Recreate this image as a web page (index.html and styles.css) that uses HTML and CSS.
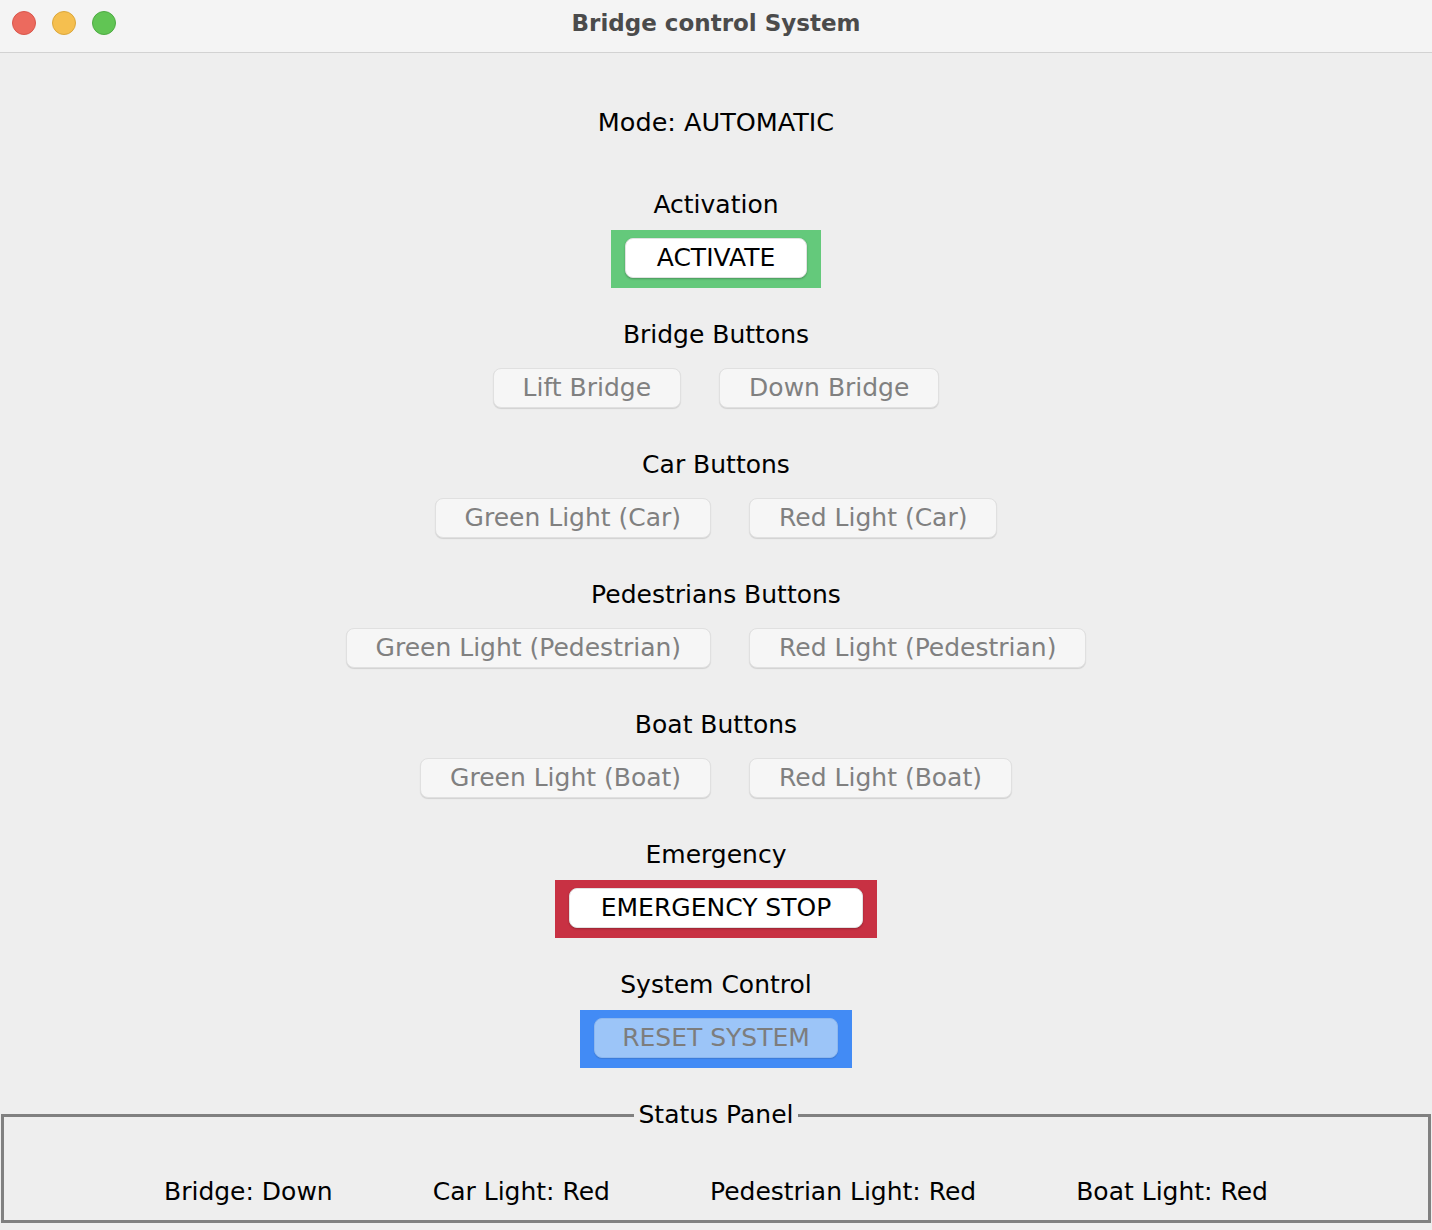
FILE: index.html
```html
<!DOCTYPE html>
<html>
<head>
<meta charset="utf-8">
<title>Bridge control System</title>
<link rel="stylesheet" href="styles.css">
</head>
<body>
<div class="window">
  <header class="titlebar">
    <div class="lights">
      <span class="light red"></span>
      <span class="light yellow"></span>
      <span class="light green"></span>
    </div>
    <div class="title">Bridge control System</div>
  </header>
  <main class="content">
    <div class="mode">Mode: AUTOMATIC</div>

    <section class="group">
      <div class="label">Activation</div>
      <div class="row panel-green">
        <button class="btn active">ACTIVATE</button>
      </div>
    </section>

    <section class="group">
      <div class="label">Bridge Buttons</div>
      <div class="row">
        <button class="btn disabled">Lift Bridge</button>
        <button class="btn disabled">Down Bridge</button>
      </div>
    </section>

    <section class="group">
      <div class="label">Car Buttons</div>
      <div class="row">
        <button class="btn disabled">Green Light (Car)</button>
        <button class="btn disabled">Red Light (Car)</button>
      </div>
    </section>

    <section class="group">
      <div class="label">Pedestrians Buttons</div>
      <div class="row">
        <button class="btn disabled">Green Light (Pedestrian)</button>
        <button class="btn disabled">Red Light (Pedestrian)</button>
      </div>
    </section>

    <section class="group">
      <div class="label">Boat Buttons</div>
      <div class="row">
        <button class="btn disabled">Green Light (Boat)</button>
        <button class="btn disabled">Red Light (Boat)</button>
      </div>
    </section>

    <section class="group">
      <div class="label">Emergency</div>
      <div class="row panel-red">
        <button class="btn active">EMERGENCY STOP</button>
      </div>
    </section>

    <section class="group">
      <div class="label">System Control</div>
      <div class="row panel-blue">
        <button class="btn reset">RESET SYSTEM</button>
      </div>
    </section>

    <fieldset class="status">
      <legend>Status Panel</legend>
      <div class="status-row">
        <span>Bridge: Down</span>
        <span>Car Light: Red</span>
        <span>Pedestrian Light: Red</span>
        <span>Boat Light: Red</span>
      </div>
    </fieldset>
  </main>
</div>
</body>
</html>
```

FILE: styles.css
```css
* { box-sizing: border-box; }
html, body { margin: 0; padding: 0; }
body {
  width: 1432px;
  height: 1230px;
  background: #eeeeee;
  font-family: "DejaVu Sans", "Liberation Sans", sans-serif;
  color: #000;
  overflow: hidden;
}
.window { display: flex; flex-direction: column; height: 1230px; }
.titlebar {
  height: 53px;
  background: #f4f4f4;
  border-bottom: 1px solid #d2d2d2;
  display: flex;
  align-items: center;
  position: relative;
}
.lights { display: flex; gap: 16px; padding-left: 12px; margin-top: -6px; }
.light { width: 24px; height: 24px; border-radius: 50%; display: block; }
.light.red { background: #ec6a5e; border: 1px solid #d9564b; }
.light.yellow { background: #f5bf4f; border: 1px solid #dba73b; }
.light.green { background: #61c554; border: 1px solid #4eab43; }
.title {
  position: absolute;
  left: 0; right: 0; top: 0;
  height: 47px;
  line-height: 47px;
  text-align: center;
  font-weight: bold;
  font-size: 23px;
  color: #4b4b4b;
}
.content {
  flex: 1;
  display: flex;
  flex-direction: column;
  align-items: center;
  padding-top: 54px;
  font-size: 25px;
}
.mode { height: 30px; line-height: 30px; margin-bottom: 53px; font-size: 25.5px; }
.group { display: flex; flex-direction: column; align-items: center; margin-bottom: 32px; }
.label { height: 30px; line-height: 30px; }
.row {
  margin-top: 10px;
  padding: 8px 14px 10px;
  display: flex;
  gap: 38px;
  justify-content: center;
}
.panel-green { background: #64c97b; }
.panel-red { background: #c83143; }
.panel-blue { background: #428bf5; }
.btn {
  height: 40px;
  padding: 0 29px;
  font-family: inherit;
  font-size: 25px;
  border-radius: 8px;
  line-height: 38px;
}
.btn.active {
  background: #ffffff;
  color: #000;
  border: 1px solid #e2e2e2;
  box-shadow: 0 1px 2px rgba(0,0,0,0.25);
  padding: 0 31px;
}
.btn.disabled {
  background: #f6f6f6;
  color: #808080;
  border: 1px solid #e0e0e0;
  box-shadow: 0 1px 1px rgba(0,0,0,0.12);
}
.btn.reset {
  background: #9cc5f8;
  color: #7d7d7d;
  border: 1px solid #8db7ee;
  box-shadow: 0 1px 1px rgba(0,0,0,0.12);
  padding: 0 27px;
}
.status {
  align-self: stretch;
  margin: 0 1px;
  height: 123px;
  border: 3px solid #808080;
  padding: 0;
  min-width: 0;
}
.status legend {
  margin: 0 auto;
  padding: 0 4px;
  line-height: 30px;
}
.status-row {
  display: flex;
  justify-content: center;
  gap: 100px;
  margin-top: 47px;
  line-height: 30px;
}
```
